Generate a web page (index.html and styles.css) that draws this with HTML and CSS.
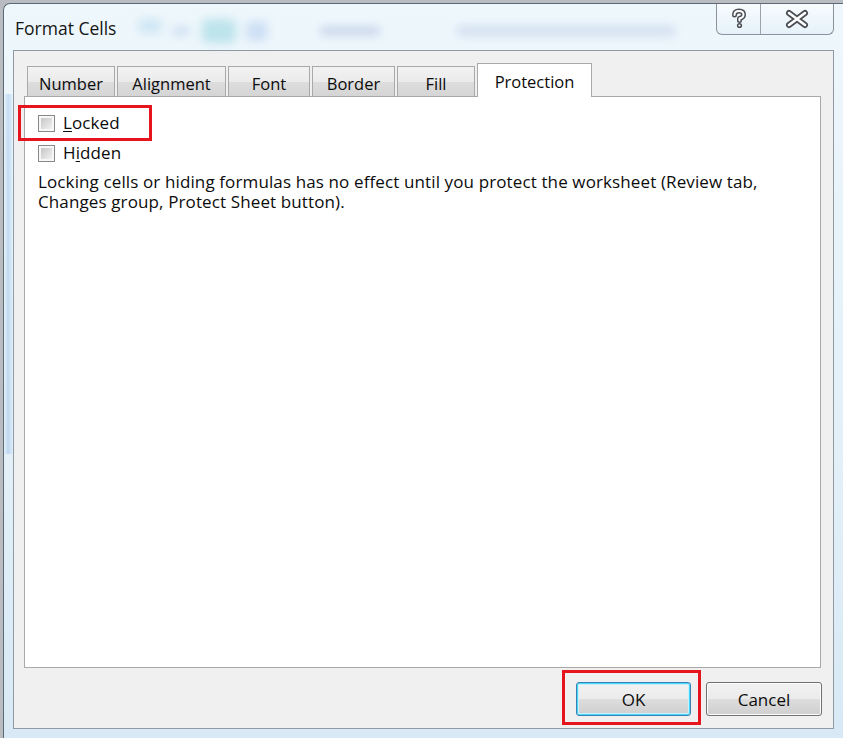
FILE: index.html
```html
<!DOCTYPE html>
<html>
<head>
<meta charset="utf-8">
<title>Format Cells</title>
<link rel="stylesheet" href="styles.css">
</head>
<body>
<div class="window">
  <div class="titlebar">
    <div class="title">Format Cells</div>
    <div class="ghosts">
      <span class="ghost g1"></span>
      <span class="ghost g2"></span>
      <span class="ghost g3"></span>
      <span class="ghost g4"></span>
      <span class="ghost g5"></span>
      <span class="ghost g6"></span>
    </div>
    <div class="caption-buttons">
      <div class="cap-btn help">
        <svg width="20" height="22" viewBox="0 0 20 22">
          <path d="M5.5 7 Q5.5 3 10 3 Q14.5 3 14.5 6.8 Q14.5 9.5 10.5 10.5 L10.5 12.5" fill="none" stroke="#4b4f55" stroke-width="5" stroke-linecap="round" stroke-linejoin="round"/>
          <circle cx="10.5" cy="17.5" r="2.6" fill="#4b4f55"/>
          <path d="M5.5 7 Q5.5 3 10 3 Q14.5 3 14.5 6.8 Q14.5 9.5 10.5 10.5 L10.5 12.5" fill="none" stroke="#ffffff" stroke-width="2" stroke-linecap="round" stroke-linejoin="round"/>
          <circle cx="10.5" cy="17.5" r="1.1" fill="#ffffff"/>
        </svg>
      </div>
      <div class="cap-btn close">
        <svg width="26" height="20" viewBox="0 0 26 20">
          <path d="M5 4 L21 16 M21 4 L5 16" fill="none" stroke="#4b4f55" stroke-width="6" stroke-linecap="round"/>
          <path d="M5 4 L21 16 M21 4 L5 16" fill="none" stroke="#ffffff" stroke-width="2.6" stroke-linecap="round"/>
        </svg>
      </div>
    </div>
  </div>
  <div class="client">
    <div class="tabs">
      <div class="tab">Number</div>
      <div class="tab">Alignment</div>
      <div class="tab">Font</div>
      <div class="tab">Border</div>
      <div class="tab">Fill</div>
      <div class="tab active">Protection</div>
    </div>
    <div class="panel">
      <div class="check-row marked">
        <span class="checkbox"></span>
        <span class="label"><u>L</u>ocked</span>
      </div>
      <div class="check-row">
        <span class="checkbox"></span>
        <span class="label">H<u>i</u>dden</span>
      </div>
      <p class="note">Locking cells or hiding formulas has no effect until you protect the worksheet (Review tab, Changes group, Protect Sheet button).</p>
    </div>
    <div class="buttons">
      <button class="btn default marked-btn">OK</button>
      <button class="btn">Cancel</button>
    </div>
  </div>
</div>
</body>
</html>
```
FILE: styles.css
```css
html, body {
  margin: 0;
  padding: 0;
}
body {
  width: 843px;
  height: 738px;
  overflow: hidden;
  background: #b9bcc0;
  font-family: "Open Sans", "Noto Sans", sans-serif;
  color: #0c0c0c;
}
.window {
  margin: 3px 0 0 3px;
  height: 735px;
  box-sizing: border-box;
  border-top: 1px solid #5f6973;
  border-left: 1px solid #5f6973;
  border-radius: 7px 0 0 0;
  background:
    linear-gradient(90deg, rgba(120,170,225,0) 0px, rgba(120,170,225,0.35) 4px, rgba(180,215,240,0.25) 8px, rgba(255,255,255,0) 9px) 0 90px / 9px 360px no-repeat,
    linear-gradient(180deg, #eef7fc 0%, #e3f0f8 60%, #d8e9f5 100%);
  display: flex;
  flex-direction: column;
}
.titlebar {
  height: 46px;
  display: flex;
  align-items: flex-start;
  flex: none;
}
.title {
  margin: 12px 0 0 11px;
  font-size: 17.5px;
  line-height: 24px;
  font-weight: 500;
  color: #151515;
  white-space: nowrap;
}
.ghosts {
  display: flex;
  align-items: center;
  margin: 14px 0 0 22px;
  height: 26px;
}
.ghost {
  display: block;
  filter: blur(5px);
  border-radius: 6px;
}
.g1 { width: 24px; height: 14px; background: rgba(150,200,230,0.35); margin-top: -10px; }
.g2 { width: 18px; height: 8px; background: rgba(140,175,220,0.35); margin-left: 10px; }
.g3 { width: 34px; height: 24px; background: rgba(130,205,215,0.45); margin-left: 12px; }
.g4 { width: 22px; height: 20px; background: rgba(160,190,235,0.4); margin-left: 10px; }
.g5 { width: 60px; height: 8px; background: rgba(120,140,200,0.35); margin-left: 52px; }
.g6 { width: 220px; height: 10px; background: rgba(150,170,215,0.3); margin-left: 76px; }
.caption-buttons {
  margin-left: auto;
  margin-right: 9px;
  display: flex;
  height: 31px;
  box-sizing: border-box;
  border: 1px solid #8a939c;
  border-top: none;
  border-radius: 0 0 6px 6px;
  background: linear-gradient(180deg, rgba(255,255,255,0.55), rgba(225,238,248,0.6));
  overflow: hidden;
}
.cap-btn {
  display: flex;
  align-items: center;
  justify-content: center;
}
.help {
  width: 43px;
  border-right: 1px solid #9aa3ab;
}
.close {
  width: 72px;
}
.client {
  flex: 1;
  margin: 0 9px 9px 9px;
  border: 1px solid #8f9aa5;
  background: #f0f0f0;
  padding: 15px 12px 0 10px;
  display: flex;
  flex-direction: column;
}
.tabs {
  display: flex;
  align-items: flex-end;
  height: 30px;
  padding-left: 3px;
  flex: none;
}
.tab {
  height: 30px;
  box-sizing: border-box;
  margin-right: 2px;
  border: 1px solid #a9a9a9;
  border-bottom: none;
  background: linear-gradient(180deg, #f2f2f2 0%, #ebebeb 50%, #dddddd 51%, #d5d5d5 100%);
  font-size: 16.5px;
  font-weight: 500;
  padding-top: 3px;
  line-height: 27px;
  text-align: center;
  color: #0c0c0c;
}
.tab:nth-child(1) { width: 88px; }
.tab:nth-child(2) { width: 109px; }
.tab:nth-child(3) { width: 82px; }
.tab:nth-child(4) { width: 83px; }
.tab:nth-child(5) { width: 78px; }
.tab.active {
  width: 115px;
  height: 34px;
  margin-bottom: -1px;
  background: #ffffff;
  padding-top: 4px;
  line-height: 28px;
  position: relative;
  z-index: 1;
}
.panel {
  height: 572px;
  box-sizing: border-box;
  border: 1px solid #a9a9a9;
  background: #ffffff;
  padding: 11px 12px 0 13px;
  flex: none;
}
.check-row {
  display: flex;
  width: max-content;
  align-items: center;
  height: 30px;
  position: relative;
}
.checkbox {
  width: 17px;
  height: 17px;
  box-sizing: border-box;
  border: 1px solid #878888;
  padding: 2px;
  background: linear-gradient(135deg, #c6c6c6, #f2f2f2) content-box, #f7f7f7;
  flex: none;
}
.label {
  margin-left: 8px;
  font-size: 17px;
  font-weight: 500;
  letter-spacing: 0.1px;
  line-height: 20px;
}
.label u {
  text-underline-offset: 2px;
}
.marked::after {
  content: "";
  position: absolute;
  top: -3px;
  bottom: -3px;
  left: -20px;
  right: -32px;
  border: 3px solid #e5141d;
}
.note {
  margin: 4px 0 0 0;
  font-size: 17px;
  font-weight: 500;
  letter-spacing: 0.12px;
  line-height: 20px;
}
.buttons {
  display: flex;
  justify-content: flex-end;
  margin-top: 14px;
  margin-right: -1px;
  gap: 15px;
}
.btn {
  font-family: "Open Sans", "Noto Sans", sans-serif;
  font-size: 17px;
  font-weight: 500;
  color: #0c0c0c;
  height: 34px;
  width: 115px;
  box-sizing: border-box;
  border: 1px solid #707070;
  border-radius: 3px;
  background: linear-gradient(180deg, #f2f2f2 0%, #ebebeb 50%, #dddddd 51%, #cfcfcf 100%);
  box-shadow: inset 0 0 0 1px #fcfcfc;
  padding: 0;
  margin: 0;
}
.btn + .btn { width: 116px; }
.btn.default {
  border-color: #3c7fb1;
  box-shadow: inset 0 0 0 1px #48d8fb, inset 0 0 0 2px #c4f0fd;
}
.marked-btn {
  position: relative;
}
.marked-btn::after {
  content: "";
  position: absolute;
  top: -13px;
  bottom: -10px;
  left: -15px;
  right: -11px;
  border: 3px solid #e5141d;
}
```
